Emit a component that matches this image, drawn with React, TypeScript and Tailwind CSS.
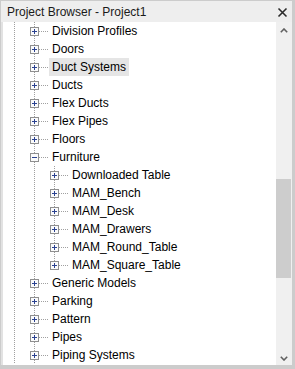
import React from 'react'

type Row = { label: string; level: 1 | 2; expanded?: boolean; last?: boolean; selected?: boolean }

const ROWS: Row[] = [
  { label: 'Division Profiles', level: 1 },
  { label: 'Doors', level: 1 },
  { label: 'Duct Systems', level: 1, selected: true },
  { label: 'Ducts', level: 1 },
  { label: 'Flex Ducts', level: 1 },
  { label: 'Flex Pipes', level: 1 },
  { label: 'Floors', level: 1 },
  { label: 'Furniture', level: 1, expanded: true },
  { label: 'Downloaded Table', level: 2 },
  { label: 'MAM_Bench', level: 2 },
  { label: 'MAM_Desk', level: 2 },
  { label: 'MAM_Drawers', level: 2 },
  { label: 'MAM_Round_Table', level: 2 },
  { label: 'MAM_Square_Table', level: 2, last: true },
  { label: 'Generic Models', level: 1 },
  { label: 'Parking', level: 1 },
  { label: 'Pattern', level: 1 },
  { label: 'Pipes', level: 1 },
  { label: 'Piping Systems', level: 1 },
]

const DOT = '#a0a0a0'

// vertical guide for an ancestor level
function Guide() {
  return (
    <svg width="20" height="18" className="shrink-0" shapeRendering="crispEdges">
      <line x1="10.5" y1="0" x2="10.5" y2="18" stroke={DOT} strokeDasharray="1 1" />
    </svg>
  )
}

function NodeCell({ expanded, last }: { expanded?: boolean; last?: boolean }) {
  return (
    <svg width="24" height="18" className="shrink-0" shapeRendering="crispEdges">
      <line x1="10.5" y1="0" x2="10.5" y2={last ? 9 : 18} stroke={DOT} strokeDasharray="1 1" />
      <line x1="15" y1="9.5" x2="24" y2="9.5" stroke={DOT} strokeDasharray="1 1" />
      <rect x="6.5" y="5.5" width="8" height="8" fill="#fbfbfb" stroke="#8f8f8f" />
      <line x1="8" y1="9.5" x2="13" y2="9.5" stroke="#2a4190" />
      {!expanded && <line x1="10.5" y1="7" x2="10.5" y2="12" stroke="#2a4190" />}
    </svg>
  )
}

export default function App() {
  return (
    <div
      className="w-[295px] h-[369px] bg-[#cccccc] pt-[1px] pl-[1px] pr-[3px] pb-[4px] flex flex-col text-[12px] text-black"
      style={{ fontFamily: '"Liberation Sans", Arial, sans-serif' }}
    >
      {/* Title bar */}
      <div className="h-[21px] bg-[#eeeeee] flex items-center justify-between pl-[6px] pr-[4px] shrink-0">
        <span className="text-[#1a1a1a] leading-none pt-[1px]">Project Browser - Project1</span>
        <svg width="11" height="11" viewBox="0 0 11 11" className="mt-[2px]">
          <path d="M1.5 1.5 L9.5 9.5 M9.5 1.5 L1.5 9.5" stroke="#2b2b2b" strokeWidth="1.6" />
        </svg>
      </div>

      <div className="flex flex-1 bg-[#e2e2e2] pl-[2px] min-h-0">
        {/* Tree */}
        <div className="flex-1 bg-white overflow-hidden">
          {ROWS.map((row) => (
            <div key={row.label} className="flex items-center h-[18px] pl-[1px]">
              <Guide />
              {row.level === 2 && <Guide />}
              <NodeCell expanded={row.expanded} last={row.last} />
              <span
                className={`ml-[1px] px-[3px] h-[18px] leading-[18px] whitespace-nowrap ${
                  row.selected ? 'bg-[#e5e5e5]' : ''
                }`}
              >
                {row.label}
              </span>
            </div>
          ))}
        </div>

        {/* Scrollbar */}
        <div className="w-[16px] bg-[#f0f0f0] flex flex-col shrink-0">
          <div className="h-[17px] flex items-center justify-center">
            <svg width="8" height="5" viewBox="0 0 8 5">
              <path d="M0.8 4.2 L4 1 L7.2 4.2" fill="none" stroke="#606060" strokeWidth="1.6" />
            </svg>
          </div>
          <div className="flex-1 pr-[1px]">
            <div className="mt-[140px] h-[99px] bg-[#cdcdcd]" />
          </div>
          <div className="h-[17px] flex items-end justify-center pb-[4px]">
            <svg width="8" height="5" viewBox="0 0 8 5">
              <path d="M0.8 0.8 L4 4 L7.2 0.8" fill="none" stroke="#606060" strokeWidth="1.6" />
            </svg>
          </div>
        </div>
      </div>
    </div>
  )
}
